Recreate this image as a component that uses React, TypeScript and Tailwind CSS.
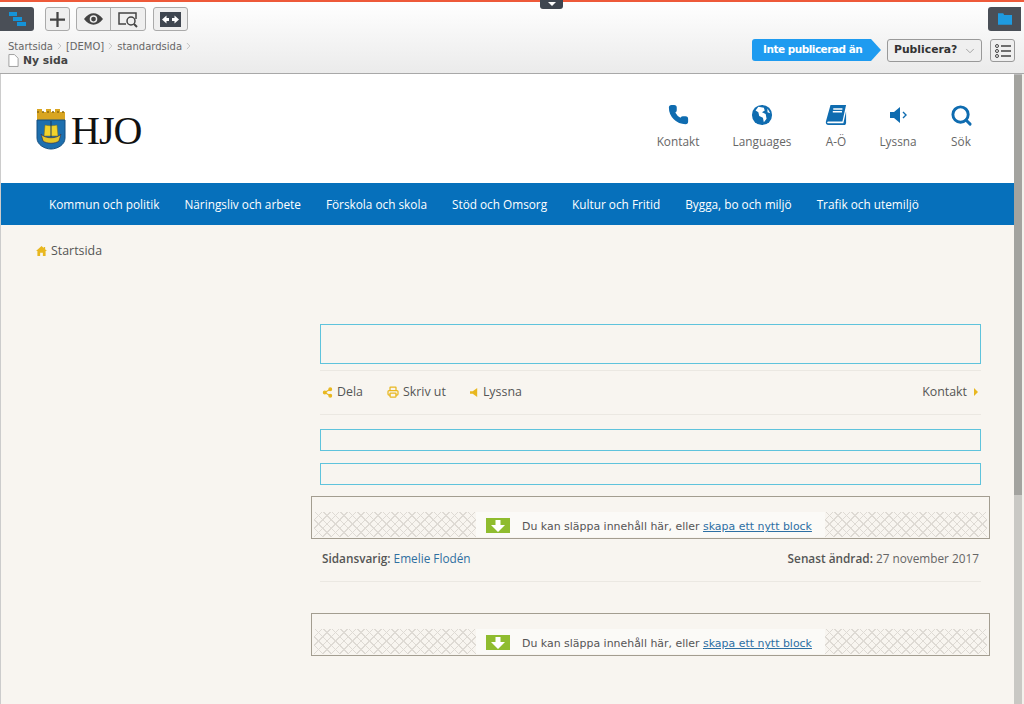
import React from "react";
import { ChevronDown, ChevronRight, Phone, Search, Share2, Printer } from "lucide-react";

const nav = ["Kommun och politik", "Näringsliv och arbete", "Förskola och skola", "Stöd och Omsorg", "Kultur och Fritid", "Bygga, bo och miljö", "Trafik och utemiljö"];

function Speaker({ className }: { className: string }) {
  return (
    <svg viewBox="0 0 20 20" className={className} fill="currentColor">
      <path d="M2 7h4l6-5v16l-6-5H2z" />
      <path d="M15 7l3 3-3 3" fill="none" stroke="currentColor" strokeWidth="1.4" />
    </svg>
  );
}

function Crest() {
  return (
    <svg viewBox="0 0 30 42" className="w-[30px] h-[42px]">
      <path d="M1 1h5v3h4V1h5v3h4V1h5v3h5v9H1z" fill="#d9a520" />
      <path d="M1 4h28" stroke="#8a6a10" strokeDasharray="2 3" strokeWidth="1.500" />
      <path d="M1 12h28v18c0 7-8 11-14 11S1 37 1 30z" fill="#1d6fae" stroke="#154f80" />
      <path d="M9 17c4 1 8 1 12 0l1 11H8z" fill="#f2d32c" stroke="#7a6a18" strokeWidth=".5" />
      <path d="M15 13v16" stroke="#1b3a5c" />
      <path d="M5 26c4 5 16 5 20 0l-2 7c-4 3-12 3-16 0z" fill="#e5c72b" stroke="#335" strokeWidth=".7" />
    </svg>
  );
}

function Globe() {
  return (
    <svg viewBox="0 0 24 24" className="w-[22px] h-[22px]">
      <circle cx="12" cy="12" r="11" fill="#0f6cb0" />
      <path d="M8 3l6 1 1 3-3 2 4 2 1 5-3 4-1-5-4-2-1-4-3-2zM18 5l3 5-3-1z" fill="#fff" />
    </svg>
  );
}

function Book() {
  return (
    <svg viewBox="0 0 24 24" className="w-[22px] h-[22px]">
      <path d="M6 1h17l-4 18H3.500c-1 0-1.500 1-1 1.500S3 21 4 21h16l3-13v13l-1 2H4c-2.500 0-3.500-2-3-4z" fill="#0f6cb0" />
      <path d="M9 5.500h10M8.500 8.500h10" stroke="#fff" strokeWidth="1.500" />
    </svg>
  );
}

function Dropzone() {
  return (
    <div className="h-[43px] border border-[#a39d90] mx-[-9px] flex items-end px-[2px] pb-px">
      <div className="h-[25px] flex-1 bg-[repeating-linear-gradient(45deg,#dedad4_0,#dedad4_1px,transparent_1px,transparent_6px),repeating-linear-gradient(-45deg,#dedad4_0,#dedad4_1px,transparent_1px,transparent_6px)]" />
      <div className="h-[25px] w-[349px] bg-[#fbfaf7] flex items-center pl-[10px] font-['DejaVu_Sans',sans-serif] text-[10.95px] text-[#555]">
        <span className="mt-[2px] w-[24px] h-[15px] bg-[#8fbc2f] flex items-center justify-center mr-[12px]">
          <svg viewBox="0 0 14 12" className="w-[14px] h-[12px]" fill="#fff">
            <path d="M4.500 0h5v5H14l-7 7-7-7h4.500z" />
          </svg>
        </span>
        <span className="pt-[6px]">Du kan släppa innehåll här, eller <span className="text-[#2d6fa3] underline">skapa ett nytt block</span></span>
      </div>
      <div className="h-[25px] flex-1 bg-[repeating-linear-gradient(45deg,#dedad4_0,#dedad4_1px,transparent_1px,transparent_6px),repeating-linear-gradient(-45deg,#dedad4_0,#dedad4_1px,transparent_1px,transparent_6px)]" />
    </div>
  );
}

const Sep = () => <ChevronRight className="w-[11px] h-[14px] text-[#888] mx-[1px]" strokeWidth={1} />;

export default function App() {
  return (
    <div className="relative w-[1024px] h-[704px] overflow-hidden bg-white flex flex-col font-['Open_Sans',sans-serif]">
      <div className="absolute top-0 left-[540px] w-[23px] h-[9px] bg-[#3f4650] rounded-b-[3px] flex justify-center z-10">
        <span className="mt-[2px] w-0 h-0 border-x-[4px] border-x-transparent border-t-[4px] border-t-white" />
      </div>

      {/* Toolbar */}
      <header className="h-[74px] shrink-0 border-t-2 border-t-[#ee5a3a] border-b border-b-[#a8a8a8] bg-gradient-to-b from-white to-[#ebebeb] font-['DejaVu_Sans',sans-serif] flex flex-col">
        <div className="flex h-[35px] pt-[5px] justify-between items-start">
          <div className="flex items-start">
            <div className="w-[34px] h-[24px] bg-[#4a4f57] rounded-r-[3px] flex items-center justify-center">
              <svg viewBox="0 0 17 14" className="w-[17px] h-[14px]" fill="#1593d8">
                <path d="M0 0h8v4H0zM4 5h9v4H4zM8 10h9v4H8z" />
              </svg>
            </div>
            <div className="ml-[11px] w-[25px] h-[24px] border border-[#aaa] rounded-[3px] bg-[#efefef] flex items-center justify-center">
              <svg viewBox="0 0 16 16" className="w-[15px] h-[15px]" fill="#444">
                <path d="M6.800 0h2.400v6.800H16v2.400H9.200V16H6.800V9.200H0V6.800h6.800z" />
              </svg>
            </div>
            <div className="ml-[6px] h-[24px] border border-[#aaa] rounded-[3px] flex bg-[#efefef]">
              <div className="w-[34px] flex items-center justify-center border-r border-[#aaa]">
                <svg viewBox="0 0 20 12" className="w-[19px] h-[12px]" fill="#444">
                  <path fillRule="evenodd" d="M0 6c3-4 6.500-6 10-6s7 2 10 6c-3 4-6.500 6-10 6S3 10 0 6zm10-4a4 4 0 100 8 4 4 0 000-8z" />
                  <circle cx="10" cy="6" r="2.500" />
                </svg>
              </div>
              <div className="w-[34px] flex items-center justify-center">
                <svg viewBox="0 0 22 18" className="w-[22px] h-[18px]" fill="none" stroke="#444" strokeWidth="1.500">
                  <path d="M9 14H2V3h17v6" />
                  <circle cx="14" cy="11" r="4" />
                  <path d="M17 14l3 3" strokeWidth="2" />
                </svg>
              </div>
            </div>
            <div className="ml-[7px] w-[35px] h-[24px] border border-[#aaa] rounded-[3px] bg-[#efefef] flex items-center justify-center">
              <svg viewBox="0 0 21 15" className="w-[21px] h-[15px]">
                <rect width="21" height="15" fill="#3f4650" />
                <path d="M2 7.500l4.500-4v2.500h2.500v3H6.500v2.500zM19 7.500l-4.500-4v2.500H12v3h2.500v2.500z" fill="#fff" />
              </svg>
            </div>
          </div>
          <div className="w-[33px] h-[24px] bg-[#4a4f57] rounded-l-[3px] flex items-center justify-center mr-[3px]">
            <svg viewBox="0 0 16 13" className="w-[14px] h-[12px]" fill="#1e9be0">
              <path d="M0 0h6l1 2h9v11H0z" />
            </svg>
          </div>
        </div>
        <div className="flex-1 flex justify-between pl-[8px] pr-[9px]">
          <div>
            <div className="flex items-center text-[10px] leading-[13px] text-[#666] mt-[2px]">
              <span>Startsida</span><Sep /><span>[DEMO]</span><Sep /><span>standardsida</span><Sep />
            </div>
            <div className="flex items-center text-[10.8px] leading-[15px] font-bold text-[#444]">
              <svg viewBox="0 0 12 14" className="w-[11px] h-[13px] mr-[4px]" fill="#fff" stroke="#999">
                <path d="M1 .5h6l4 4v9H1z" />
              </svg>
              Ny sida
            </div>
          </div>
          <div className="flex items-start">
            <div className="mt-[2px] h-[22px] flex">
              <div className="w-[119px] bg-[#1e9bf0] rounded-l-[3px] text-white text-[10.5px] whitespace-nowrap font-bold tracking-[-0.5px] flex items-center pl-[11px]">Inte publicerad än</div>
              <span className="w-0 h-0 border-y-[11px] border-y-transparent border-l-[10px] border-l-[#1e9bf0]" />
            </div>
            <div className="ml-[6px] mt-[2px] w-[95px] h-[23px] border border-[#999] rounded-[3px] bg-[#efefef] flex items-center justify-between pl-[6px] pr-[4px] text-[10.8px] font-bold text-[#333]">
              Publicera?
              <ChevronDown className="w-[14px] h-[14px] text-[#999]" strokeWidth={1.500} />
            </div>
            <div className="ml-[8px] mt-[2px] w-[25px] h-[23px] border border-[#999] rounded-[3px] bg-[#efefef] flex items-center justify-center">
              <svg viewBox="0 0 16 14" className="w-[16px] h-[14px]" fill="none" stroke="#444">
                <circle cx="2" cy="2" r="1.500" /><circle cx="2" cy="7" r="1.500" /><circle cx="2" cy="12" r="1.500" />
                <path d="M6 2h10M6 7h10M6 12h10" strokeWidth="1.500" />
              </svg>
            </div>
          </div>
        </div>
      </header>

      <div className="flex-1 flex min-h-0">
        {/* Page */}
        <main className="flex-1 bg-[#f8f5f0] flex flex-col border-l border-l-[#ccc] min-w-0">
          <div className="h-[109px] bg-white flex justify-between pl-[35px] pr-[42px]">
            <div className="flex items-center gap-[5px] h-[109px]">
              <Crest />
              <span className="font-['Liberation_Serif',serif] text-[40px] text-[#111] tracking-[-1px] mt-[4px]">HJO</span>
            </div>
            <div className="flex text-[11.8px] text-[#666] pt-[30px] leading-[16px] whitespace-nowrap">
              <div className="ml-px w-[44px] flex flex-col items-center">
                <span className="h-[22px]"><Phone className="w-[21px] h-[21px] text-[#0f6cb0] fill-[#0f6cb0]" /></span>
                <span className="mt-[7px]">Kontakt</span>
              </div>
              <div className="ml-[32px] w-[60px] flex flex-col items-center">
                <span className="h-[22px]"><Globe /></span>
                <span className="mt-[7px]">Languages</span>
              </div>
              <div className="ml-[34px] w-[20px] flex flex-col items-center">
                <span className="h-[22px]"><Book /></span>
                <span className="mt-[7px]">A-Ö</span>
              </div>
              <div className="ml-[34px] w-[36px] flex flex-col items-center">
                <span className="h-[22px]"><Speaker className="w-[20px] h-[22px] text-[#0f6cb0]" /></span>
                <span className="mt-[7px]">Lyssna</span>
              </div>
              <div className="ml-[34px] w-[22px] flex flex-col items-center">
                <span className="h-[22px]"><Search className="w-[23px] h-[23px] text-[#0f6cb0]" strokeWidth={3} /></span>
                <span className="mt-[7px]">Sök</span>
              </div>
            </div>
          </div>

          <nav className="h-[42px] bg-[#0670bb] flex items-center pl-[48px] gap-[25px] pt-[1px] text-[11.8px] text-white font-medium">
            {nav.map((n) => <span key={n}>{n}</span>)}
          </nav>

          <div className="flex-1 pl-[35px] pr-[33px] pt-[18px]">
            <div className="flex items-center text-[12.4px] text-[#555] font-medium leading-[16px]">
              <svg viewBox="0 0 12 11" className="w-[11px] h-[10px] mr-[4px]" fill="#e8b71f">
                <path d="M6 0l2.500 2.200V1H10v2.600L12 5.500h-1.500V11H7.500V7.500h-3V11H1.500V5.500H0z" />
              </svg>
              Startsida
            </div>

            <div className="ml-[284px] mt-[65px]">
              <div className="h-[40px] border border-[#5fc3dc]" />
              <div className="mt-[6px] h-[45px] border-y border-[#ebe8e2] flex items-center justify-between pl-[2px] pr-[3px] text-[12.4px] text-[#555] font-medium">
                <div className="flex items-center">
                  <Share2 className="w-[11px] h-[11px] text-[#e8b71f] fill-[#e8b71f] mr-[4px]" strokeWidth={2.500} />
                  <span>Dela</span>
                  <Printer className="w-[12px] h-[12px] text-[#e8b71f] ml-[24px] mr-[4px]" strokeWidth={2.500} />
                  <span>Skriv ut</span>
                  <svg viewBox="0 0 10 10" className="w-[9px] h-[9px] ml-[24px] mr-[4px]" fill="#e8b71f">
                    <path d="M0 3.500h3L8 0v10L3 6.500H0z" />
                  </svg>
                  <span>Lyssna</span>
                </div>
                <div className="flex items-center">
                  <span>Kontakt</span>
                  <span className="ml-[7px] w-0 h-0 border-y-[4px] border-y-transparent border-l-[4px] border-l-[#e8b71f]" />
                </div>
              </div>
              <div className="mt-[14px] h-[22px] border border-[#5fc3dc]" />
              <div className="mt-[12px] h-[22px] border border-[#5fc3dc]" />
              <div className="mt-[11px]"><Dropzone /></div>
              <div className="h-[43px] border-b border-[#ebe8e2] flex items-center justify-between pl-[2px] pr-[2px] pb-[2px] text-[11.8px] text-[#666]">
                <span><b className="font-semibold text-[#555]">Sidansvarig:</b> <span className="text-[#2f6f9f]">Emelie Flodén</span></span>
                <span><b className="font-semibold text-[#555]">Senast ändrad:</b> 27 november 2017</span>
              </div>
              <div className="mt-[31px]"><Dropzone /></div>
            </div>
          </div>
        </main>

        {/* Scrollbar */}
        <div className="w-[10px] shrink-0 bg-[#f3f1ec] flex flex-col pr-[2px]">
          <div className="h-[421px] bg-[#a3a39f] border-t border-[#bbb]" />
          <div className="flex-1 bg-[#c9c8c4]" />
        </div>
      </div>
    </div>
  );
}
